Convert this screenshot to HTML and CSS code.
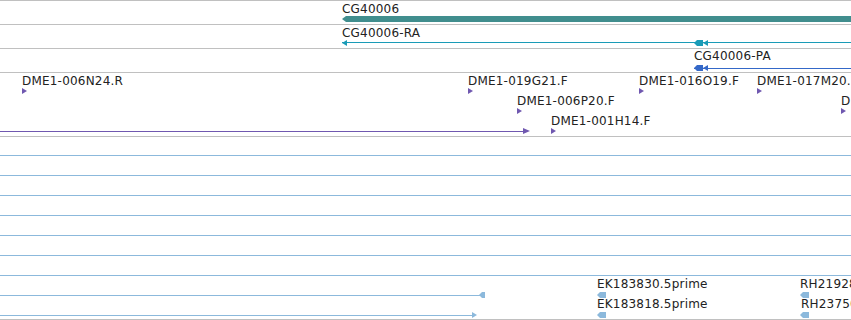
FILE: index.html
```html
<!DOCTYPE html>
<html lang="en">
<head>
    <meta charset="UTF-8">
    <meta name="viewport" content="width=device-width, initial-scale=1.0">
    <title>Track view</title>
    <link rel="stylesheet" href="styles.css">
</head>
<body>
    <div class="browser">
        <!-- gene -->
        <div class="track track-gene">
            <div class="row">
                <span class="label" style="left: 342px">CG40006</span>
                <div class="gene-bar" style="left: 342px"></div>
            </div>
        </div>

        <!-- transcript -->
        <div class="track track-ra">
            <div class="row">
                <span class="label" style="left: 342px">CG40006-RA</span>
                <div class="line to-end" style="left: 342px"></div>
                <div class="tri-l" style="left: 342px"></div>
                <div class="block-l" style="left: 694px"></div>
                <div class="tri-l" style="left: 703px"></div>
            </div>
        </div>

        <!-- protein -->
        <div class="track track-pa">
            <div class="row">
                <span class="label" style="left: 694px">CG40006-PA</span>
                <div class="line to-end" style="left: 694px"></div>
                <div class="block-l" style="left: 694px"></div>
                <div class="tri-l" style="left: 703px"></div>
            </div>
        </div>

        <!-- BAC ends -->
        <div class="track track-dme stacked">
            <div class="row">
                <span class="label" style="left: 22px">DME1-006N24.R</span>
                <div class="tri-r" style="left: 22px"></div>
                <span class="label" style="left: 468px">DME1-019G21.F</span>
                <div class="tri-r" style="left: 468px"></div>
                <span class="label" style="left: 639px">DME1-016O19.F</span>
                <div class="tri-r" style="left: 639px"></div>
                <span class="label" style="left: 757px">DME1-017M20.F</span>
                <div class="tri-r" style="left: 757px"></div>
            </div>
            <div class="row">
                <span class="label" style="left: 517px">DME1-006P20.F</span>
                <div class="tri-r" style="left: 517px"></div>
                <span class="label" style="left: 841px">DME1-002A11.F</span>
                <div class="tri-r" style="left: 841px"></div>
            </div>
            <div class="row">
                <div class="line" style="left: 0; width: 523px"></div>
                <div class="tri-r wide" style="left: 523px"></div>
                <span class="label" style="left: 551px">DME1-001H14.F</span>
                <div class="tri-r" style="left: 551px"></div>
            </div>
        </div>

        <!-- ESTs -->
        <div class="track track-est stacked">
            <div class="row"><div class="line full"></div></div>
            <div class="row"><div class="line full"></div></div>
            <div class="row"><div class="line full"></div></div>
            <div class="row"><div class="line full"></div></div>
            <div class="row"><div class="line full"></div></div>
            <div class="row"><div class="line full"></div></div>
            <div class="row"><div class="line full"></div></div>
            <div class="row">
                <div class="line" style="left: 0; width: 480px"></div>
                <div class="block-l small" style="left: 479px"></div>
                <span class="label" style="left: 597px">EK183830.5prime</span>
                <div class="block-l" style="left: 597px"></div>
                <span class="label" style="left: 800px">RH21928.5prime</span>
                <div class="block-l" style="left: 800px"></div>
            </div>
            <div class="row">
                <div class="line" style="left: 0; width: 472px"></div>
                <div class="tri-r" style="left: 472px"></div>
                <span class="label" style="left: 597px">EK183818.5prime</span>
                <div class="block-l" style="left: 597px"></div>
                <span class="label" style="left: 801px">RH23750.5prime</span>
                <div class="block-l" style="left: 800px"></div>
            </div>
        </div>
    </div>
</body>
</html>
```

FILE: styles.css
```css
body { margin: 0; background: #fff; font-family: "DejaVu Sans", sans-serif; font-size: 12px; color: #222; }
.browser { width: 851px; height: 320px; overflow: hidden; border-top: 1px solid #c0c0c0; }

/* tracks */
.track { border-bottom: 1px solid #c0c0c0; }
.track-gene { color: #418e8e; }
.track-ra { color: #1a9bb7; }
.track-pa { color: #3468c8; }
.track-dme { color: #7058b0; }
.track-est { color: #8cb9dc; }
.stacked.track-dme { padding-bottom: 3px; }
.stacked.track-est { padding-bottom: 2px; }

.row { position: relative; height: 20px; }
.track-gene .row, .track-ra .row, .track-pa .row { height: 23px; }

.label { position: absolute; top: 1px; line-height: 14px; letter-spacing: 0.2px; white-space: nowrap; color: #222; }
.track-pa .label, .track-est .label { top: 0; }

/* glyphs */
.line { position: absolute; top: 18px; height: 1px; background: currentColor; }
.line.to-end { right: 0; }
.line.full { left: 0; right: 0; }
.track-ra .line { top: 17px; }
.track-pa .line { top: 19px; }

.gene-bar {
    position: absolute; top: 15px; right: 0; height: 6px; background: currentColor;
    clip-path: polygon(0 50%, 4px 0, 100% 0, 100% 100%, 4px 100%);
}

.tri-r, .tri-l { position: absolute; top: 15px; width: 0; height: 0; border-top: 3px solid transparent; border-bottom: 3px solid transparent; }
.tri-r { border-left: 5px solid currentColor; }
.tri-r.wide { border-left-width: 7px; }
.tri-l { border-right: 5px solid currentColor; }

.block-l {
    position: absolute; top: 15px; width: 9px; height: 6px; background: currentColor;
    clip-path: polygon(0 50%, 3px 0, 100% 0, 100% 100%, 3px 100%);
}
.block-l.small { width: 6px; }
.track-pa .block-l, .track-pa .tri-l { top: 16px; }
```
